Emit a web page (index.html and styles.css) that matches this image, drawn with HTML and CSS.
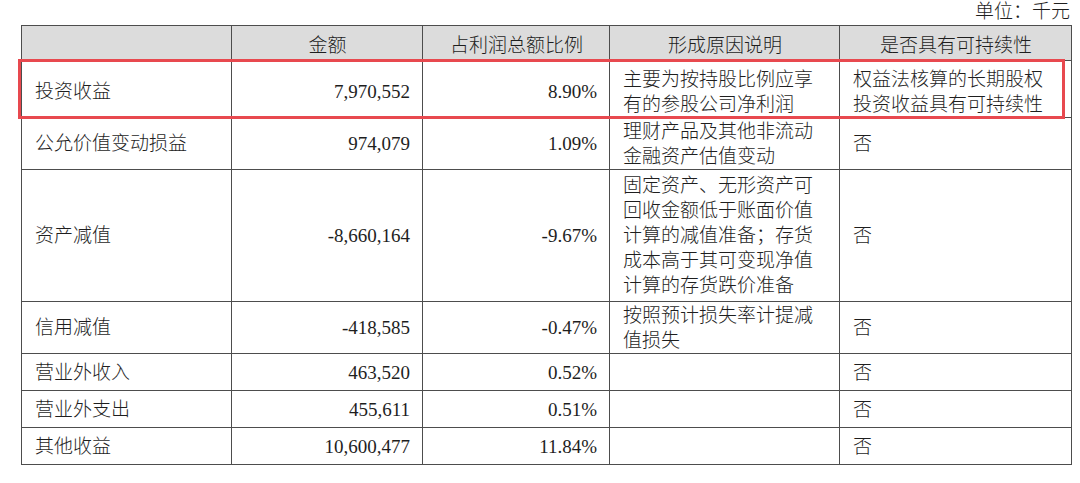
FILE: index.html
```html
<!DOCTYPE html>
<html lang="zh-CN">
<head>
<meta charset="utf-8">
<title>非经常性损益</title>
<link rel="stylesheet" href="styles.css">
</head>
<body>
<div class="page">
  <div class="unit">单位：千元</div>
  <div class="table-wrap">
    <table class="report">
      <colgroup>
        <col class="c-name">
        <col class="c-amt">
        <col class="c-pct">
        <col class="c-desc">
        <col class="c-sus">
      </colgroup>
      <thead>
        <tr class="r-head">
          <th></th>
          <th>金额</th>
          <th>占利润总额比例</th>
          <th>形成原因说明</th>
          <th>是否具有可持续性</th>
        </tr>
      </thead>
      <tbody>
        <tr class="r-first">
          <td class="name">投资收益</td>
          <td class="num">7,970,552</td>
          <td class="num">8.90%</td>
          <td class="desc">主要为按持股比例应享<br>有的参股公司净利润</td>
          <td class="sus">权益法核算的长期股权<br>投资收益具有可持续性</td>
        </tr>
        <tr class="r-two">
          <td class="name">公允价值变动损益</td>
          <td class="num">974,079</td>
          <td class="num">1.09%</td>
          <td class="desc">理财产品及其他非流动<br>金融资产估值变动</td>
          <td class="sus">否</td>
        </tr>
        <tr class="r-five">
          <td class="name">资产减值</td>
          <td class="num">-8,660,164</td>
          <td class="num">-9.67%</td>
          <td class="desc">固定资产、无形资产可<br>回收金额低于账面价值<br>计算的减值准备；存货<br>成本高于其可变现净值<br>计算的存货跌价准备</td>
          <td class="sus">否</td>
        </tr>
        <tr class="r-two">
          <td class="name">信用减值</td>
          <td class="num">-418,585</td>
          <td class="num">-0.47%</td>
          <td class="desc">按照预计损失率计提减<br>值损失</td>
          <td class="sus">否</td>
        </tr>
        <tr class="r-one">
          <td class="name">营业外收入</td>
          <td class="num">463,520</td>
          <td class="num">0.52%</td>
          <td class="desc"></td>
          <td class="sus">否</td>
        </tr>
        <tr class="r-one">
          <td class="name">营业外支出</td>
          <td class="num">455,611</td>
          <td class="num">0.51%</td>
          <td class="desc"></td>
          <td class="sus">否</td>
        </tr>
        <tr class="r-one">
          <td class="name">其他收益</td>
          <td class="num">10,600,477</td>
          <td class="num">11.84%</td>
          <td class="desc"></td>
          <td class="sus">否</td>
        </tr>
      </tbody>
    </table>
    <div class="highlight"></div>
  </div>
</div>
</body>
</html>
```

FILE: styles.css
```css
html, body {
  margin: 0;
  padding: 0;
  background: #ffffff;
}

body {
  font-family: "Liberation Serif", "Noto Sans CJK SC", serif;
  font-size: 19px;
  color: #1e1e1e;
}

.page {
  width: 1049px;
  padding-left: 21px;
}

.unit {
  height: 25px;
  line-height: 23px;
  text-align: right;
  font-weight: 300;
}

.table-wrap {
  position: relative;
}

.report {
  width: 1050px;
  border-collapse: collapse;
  table-layout: fixed;
}

.c-name { width: 210px; }
.c-amt  { width: 191px; }
.c-pct  { width: 187px; }
.c-desc { width: 230px; }
.c-sus  { width: 232px; }

.report th,
.report td {
  border: 1px solid #4d4d4d;
  padding: 0 12px 0 13px;
  line-height: 25px;
  vertical-align: middle;
  font-weight: 300;
}

.report th {
  background: #dcdcdc;
  text-align: center;
  padding-top: 4px;
}

.r-head  { height: 35px; }
.r-first { height: 57px; }
.r-two   { height: 52px; }
.r-five  { height: 132px; }
.r-one   { height: 37px; }

.r-first td { padding-top: 5px; }

.name { text-align: left; }
.num  { text-align: right; }
.desc { text-align: left; }
.sus  { text-align: left; padding-left: 14px; }

.highlight {
  position: absolute;
  left: -3px;
  top: 34px;
  width: 1047px;
  height: 60px;
  box-sizing: border-box;
  border: 3px solid #e8494f;
  pointer-events: none;
}
```
